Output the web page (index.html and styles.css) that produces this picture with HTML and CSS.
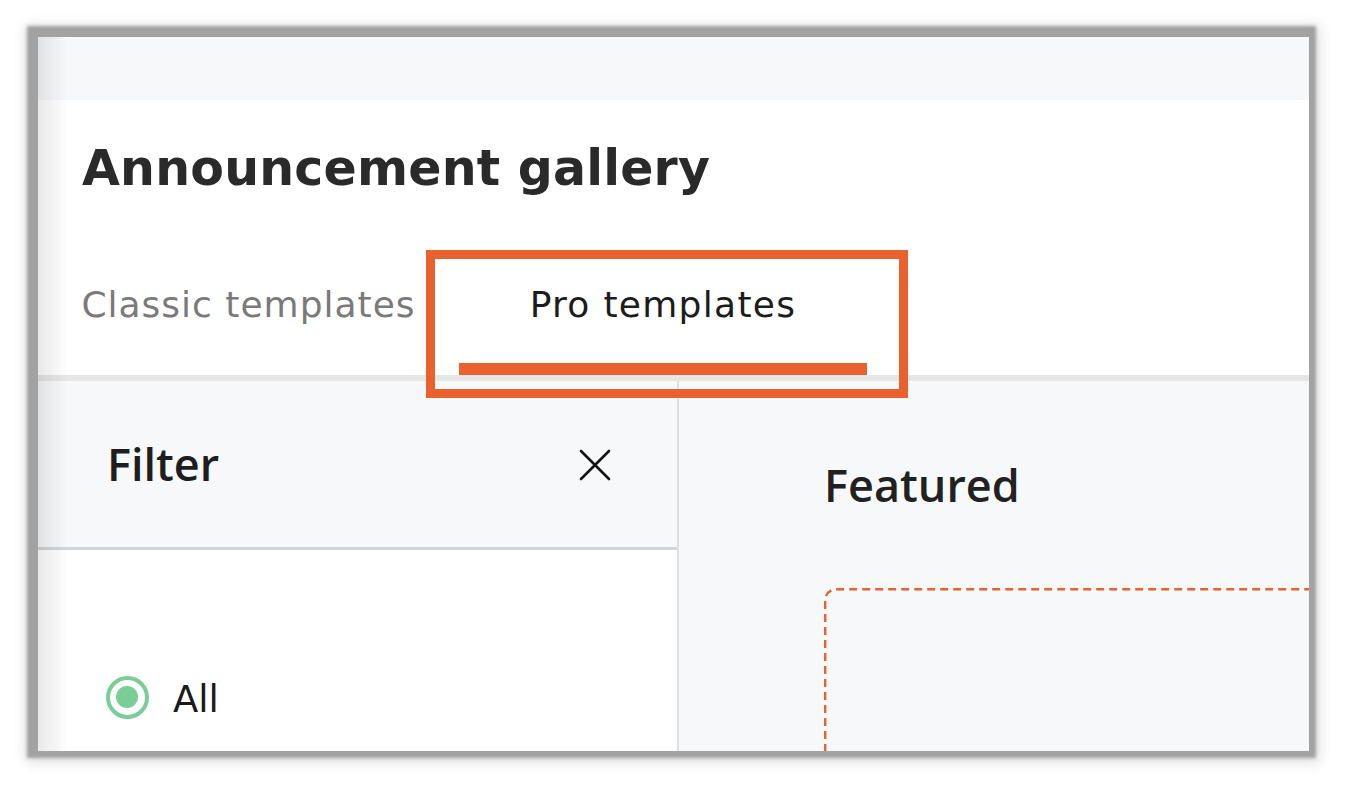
FILE: index.html
```html
<!DOCTYPE html>
<html lang="en">
<head>
<meta charset="utf-8">
<title>Announcement gallery</title>
<link rel="stylesheet" href="styles.css">
</head>
<body>
<div class="frame">
  <div class="topbar"></div>
  <header class="head">
    <h1 class="title">Announcement gallery</h1>
    <nav class="tabs">
      <div class="tab tab-classic"><span class="tab-label">Classic templates</span><span class="tab-bar"></span></div>
      <div class="tab tab-pro is-active"><span class="tab-label">Pro templates</span><span class="tab-bar"></span></div>
    </nav>
  </header>
  <div class="body">
    <aside class="filter">
      <div class="filter-head">
        <h2 class="filter-title">Filter</h2>
        <span class="close" aria-label="Close">
          <svg width="32" height="32" viewBox="0 0 32 32"><path d="M2 2 L30 30 M30 2 L2 30" stroke="#141414" stroke-width="2.6" stroke-linecap="round" fill="none"/></svg>
        </span>
      </div>
      <div class="filter-list">
        <label class="radio"><span class="radio-dot"></span><span class="radio-label">All</span></label>
      </div>
    </aside>
    <main class="content">
      <h2 class="section-title">Featured</h2>
      <div class="featured-card">
        <svg class="card-outline" width="700" height="400" viewBox="0 0 700 400"><rect x="1.2" y="1.2" width="697.6" height="397.6" rx="11" ry="11" fill="none" stroke="#e8612f" stroke-width="2.4" stroke-dasharray="8 5"/></svg>
      </div>
    </main>
  </div>
  <div class="highlight"></div>
</div>
</body>
</html>
```

FILE: styles.css
```css
html, body {
  margin: 0;
  padding: 0;
  background: #ffffff;
}

body {
  padding: 37px 0 37px 38px;
  min-height: 788px;
  box-sizing: border-box;
  font-family: "DejaVu Sans", sans-serif;
}

.frame {
  position: relative;
  width: 1271px;
  height: 714px;
  background: #ffffff;
  display: flex;
  flex-direction: column;
  overflow: hidden;
  box-shadow: -2px -2px 3px 9px #a2a2a2, -1px 0 12px 12px rgba(0, 0, 0, 0.12);
}

.frame::before {
  content: "";
  position: absolute;
  left: 0;
  top: 0;
  bottom: 0;
  width: 30px;
  background: linear-gradient(to right, rgba(0, 0, 0, 0.09), rgba(0, 0, 0, 0));
  pointer-events: none;
  z-index: 2;
}

.topbar {
  height: 63px;
  background: #f7f8fa;
  flex: none;
}

.head {
  flex: none;
  padding-top: 39px;
  border-bottom: 6px solid #e6e6e6;
  background: #ffffff;
}

.title {
  margin: 0 0 84px 0;
  padding-left: 44px;
  font-family: "DejaVu Sans", sans-serif;
  font-weight: 700;
  font-size: 49px;
  line-height: 60px;
  color: #2a2a2a;
  letter-spacing: 0.2px;
}

.tabs {
  display: flex;
}

.tab {
  display: flex;
  flex-direction: column;
  align-items: center;
}

.tab-classic { width: 421px; }
.tab-pro { width: 408px; }

.tab-label {
  font-family: "DejaVu Sans", sans-serif;
  font-size: 36px;
  line-height: 44px;
  letter-spacing: 1px;
  color: #7a7a7a;
  margin-bottom: 36px;
}

.tab-bar {
  align-self: stretch;
  height: 12px;
  background: transparent;
}

.tab.is-active .tab-label { color: #1c1c1c; letter-spacing: 1.3px; }
.tab.is-active .tab-bar { background: #e8612f; }

.body {
  flex: 1;
  display: flex;
  min-height: 0;
}

.filter {
  width: 639px;
  flex: none;
  border-right: 2px solid #dedfe1;
  background: #ffffff;
}

.filter-head {
  height: 166px;
  padding: 0 66px 0 69px;
  display: flex;
  align-items: center;
  justify-content: space-between;
  background: #f7f8fa;
  border-bottom: 3px solid #d3d4d6;
}

.filter-title {
  margin: 0;
  font-family: "Open Sans", sans-serif;
  font-weight: 600;
  font-size: 45px;
  line-height: 60px;
  color: #1e1e1e;
}

.close {
  display: flex;
  width: 32px;
  height: 32px;
  margin-top: 2px;
}

.filter-list {
  padding: 123px 0 0 68px;
}

.radio {
  display: flex;
  align-items: center;
  gap: 24px;
}

.radio-dot {
  position: relative;
  width: 43px;
  height: 43px;
  box-sizing: border-box;
  border: 4.5px solid #7acd96;
  border-radius: 50%;
  background: #ffffff;
  flex: none;
}

.radio-dot::after {
  content: "";
  position: absolute;
  left: 6px;
  top: 6px;
  width: 22px;
  height: 22px;
  border-radius: 50%;
  background: #7acd96;
}

.radio-label {
  font-family: "DejaVu Sans", sans-serif;
  font-size: 37px;
  line-height: 44px;
  padding-top: 5px;
  color: #1a1a1a;
}

.content {
  flex: 1;
  background: #f7f8fa;
  padding: 74px 0 0 145px;
  overflow: hidden;
}

.section-title {
  margin: 0 0 73px 0;
  font-family: "Open Sans", sans-serif;
  font-weight: 600;
  font-size: 45px;
  line-height: 60px;
  color: #212121;
}

.featured-card {
  width: 700px;
  height: 400px;
}

.card-outline {
  display: block;
}

.highlight {
  position: absolute;
  left: 388px;
  top: 213px;
  width: 482px;
  height: 148px;
  box-sizing: border-box;
  border: 9px solid #e8612f;
  z-index: 3;
}
```
